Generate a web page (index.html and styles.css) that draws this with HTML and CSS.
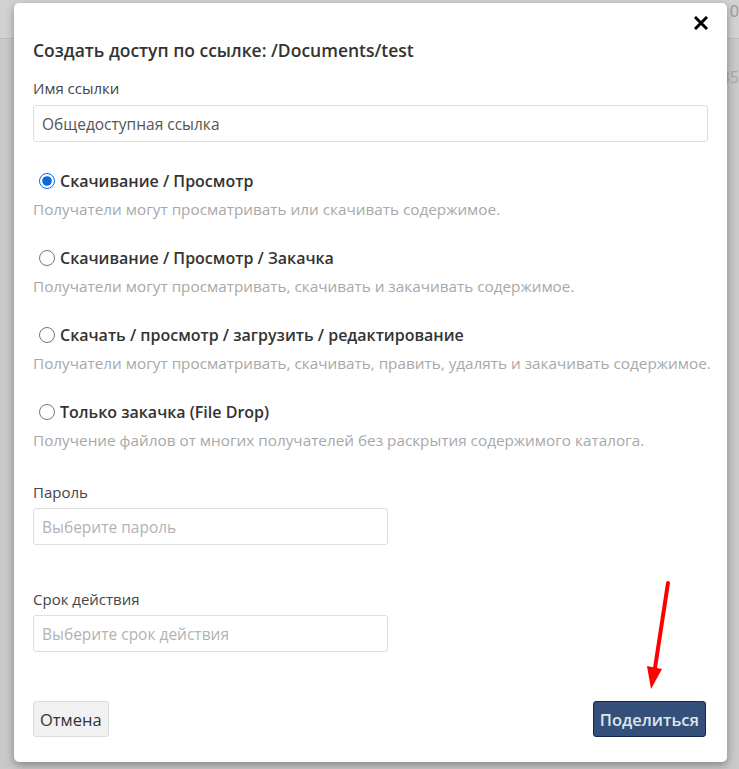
FILE: index.html
```html
<!DOCTYPE html>
<html lang="ru">
<head>
<meta charset="utf-8">
<title>Создать доступ по ссылке</title>
<link rel="stylesheet" href="styles.css">
</head>
<body>
<div class="page">
  <div class="page-header"><span class="bg-text top">0</span></div>
  <div class="page-row"><span class="bg-text">35</span></div>
</div>

<div class="modal">
  <div class="modal-close-row">
    <button class="close" type="button" aria-label="Закрыть">
      <svg width="14" height="14" viewBox="0 0 14 14"><path d="M2 2 L12 12 M12 2 L2 12" stroke="#000" stroke-width="3" stroke-linecap="square"/></svg>
    </button>
  </div>
  <h2 class="modal-title">Создать доступ по ссылке: /Documents/test</h2>

  <label class="field-label">Имя ссылки</label>
  <input class="text-input wide" type="text" value="Общедоступная ссылка">

  <div class="option">
    <label class="option-label"><input type="radio" name="perm" checked> Скачивание / Просмотр</label>
    <div class="option-desc">Получатели могут просматривать или скачивать содержимое.</div>
  </div>
  <div class="option">
    <label class="option-label"><input type="radio" name="perm"> Скачивание / Просмотр / Закачка</label>
    <div class="option-desc">Получатели могут просматривать, скачивать и закачивать содержимое.</div>
  </div>
  <div class="option">
    <label class="option-label"><input type="radio" name="perm"> Скачать / просмотр / загрузить / редактирование</label>
    <div class="option-desc">Получатели могут просматривать, скачивать, править, удалять и закачивать содержимое.</div>
  </div>
  <div class="option">
    <label class="option-label"><input type="radio" name="perm"> Только закачка (File Drop)</label>
    <div class="option-desc">Получение файлов от многих получателей без раскрытия содержимого каталога.</div>
  </div>

  <label class="field-label gap-pass">Пароль</label>
  <input class="text-input narrow" type="text" placeholder="Выберите пароль">

  <label class="field-label gap-exp">Срок действия</label>
  <input class="text-input narrow" type="text" placeholder="Выберите срок действия">

  <div class="modal-footer">
    <button class="btn btn-default" type="button">Отмена</button>
    <button class="btn btn-primary" type="button">Поделиться</button>
  </div>
</div>

<svg class="arrow" width="739" height="769" viewBox="0 0 739 769">
  <line x1="668" y1="583" x2="655" y2="668" stroke="#ff0000" stroke-width="4" stroke-linecap="round"/>
  <polygon points="647,666 662,669 651,689" fill="#ff0000"/>
</svg>
</body>
</html>
```

FILE: styles.css
```css
html, body {
  margin: 0;
  padding: 0;
  overflow: hidden;
}
body {
  width: 739px;
  height: 769px;
  background: #c9c9c9;
  font-family: "Open Sans", "Liberation Sans", sans-serif;
  color: #333;
}
.page-header {
  height: 38px;
  background: #d2d2d2;
  border-bottom: 1px solid #bdbdbd;
  display: flex;
  justify-content: flex-end;
}
.page-row {
  display: flex;
  justify-content: flex-end;
  padding-top: 27px;
}
.bg-text {
  font-size: 16px;
  color: #a9a9a9;
  margin-right: 0;
}
.bg-text.top {
  margin-top: 0;
  color: #9a9a9a;
}

.modal {
  position: absolute;
  left: 14px;
  top: 3px;
  width: 713px;
  height: 759px;
  box-sizing: border-box;
  background: #fff;
  border-radius: 5px;
  box-shadow: 0 3px 9px rgba(0,0,0,0.35);
  padding: 8px 19px 0 19px;
  display: flex;
  flex-direction: column;
  align-items: flex-start;
}
.modal-close-row {
  align-self: stretch;
  display: flex;
  justify-content: flex-end;
  height: 24px;
  margin-right: -5px;
}
.close {
  border: 0;
  background: none;
  padding: 0;
  width: 24px;
  height: 24px;
  display: flex;
  align-items: center;
  justify-content: center;
  cursor: pointer;
}
.modal-title {
  margin: 4px 0 0 0;
  font-size: 17.5px;
  line-height: 22px;
  font-weight: 600;
  color: #333;
}
.field-label {
  margin-top: 17px;
  font-size: 15px;
  line-height: 20px;
  color: #444;
}
.text-input {
  margin-top: 7px;
  box-sizing: border-box;
  height: 37px;
  border: 1px solid #dedede;
  border-radius: 3px;
  padding: 0 8px;
  font-family: "Open Sans", "Liberation Sans", sans-serif;
  font-size: 15.5px;
  color: #555;
  background: #fff;
  outline: none;
}
.text-input::placeholder {
  color: #b3b3b3;
}
.text-input.wide {
  align-self: stretch;
}
.text-input.narrow {
  width: 355px;
  margin-top: 6px;
}
.option {
  margin-top: 28px;
}
.option-label {
  display: flex;
  align-items: center;
  font-size: 16px;
  line-height: 22px;
  font-weight: 600;
  color: #333;
}
.option-label input {
  width: 16px;
  height: 16px;
  margin: 0 5px 0 6px;
  accent-color: #0b68e0;
}
.option-desc {
  margin-top: 7px;
  font-size: 15.3px;
  line-height: 20px;
  color: #a8a8a8;
  white-space: nowrap;
}
.gap-pass {
  margin-top: 32px;
}
.gap-exp {
  margin-top: 44px;
}
.modal-footer {
  align-self: stretch;
  margin-top: 49px;
  display: flex;
  justify-content: space-between;
  align-items: flex-start;
}
.btn {
  font-family: "Open Sans", "Liberation Sans", sans-serif;
  font-size: 16.5px;
  height: 36px;
  border-radius: 3px;
  padding: 0 6px;
  cursor: pointer;
}
.btn-default {
  background: #f1f1f1;
  border: 1px solid #dcdcdc;
  color: #333;
}
.btn-primary {
  background: #34507a;
  border: 1px solid #0f2a4d;
  color: #dfe5ee;
  font-weight: 600;
  margin-right: 2px;
}
.arrow {
  position: absolute;
  left: 0;
  top: 0;
  pointer-events: none;
}
```
